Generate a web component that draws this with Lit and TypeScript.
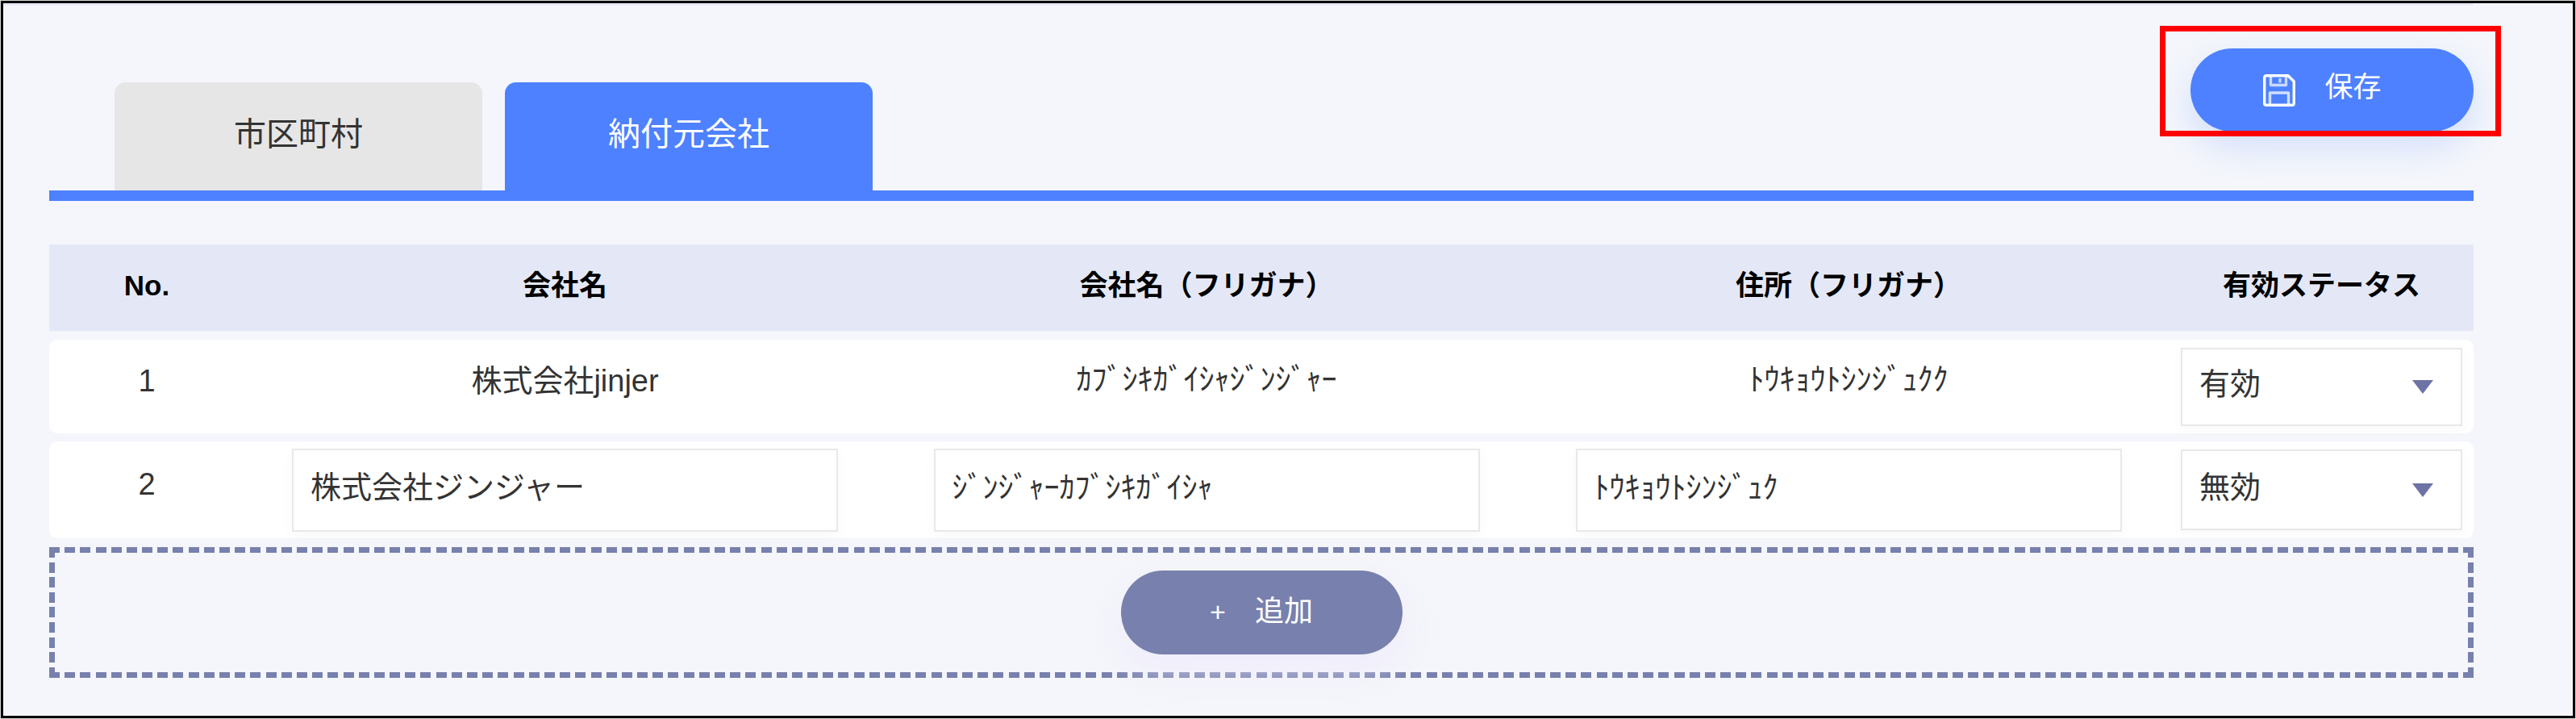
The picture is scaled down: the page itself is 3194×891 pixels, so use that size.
import { LitElement, html, css } from "lit";
import { customElement } from "lit/decorators.js";

const floppy = html`<svg class="floppy" viewBox="0 0 40 40" fill="none" stroke="#fff" stroke-width="3.4" stroke-linejoin="round">
  <path d="M4 1.700H31L38.300 9V36a2.300 2.300 0 0 1-2.300 2.300H4A2.300 2.300 0 0 1 1.700 36V4A2.300 2.300 0 0 1 4 1.700Z" />
  <path d="M9.500 2V13.500H28.500V2" stroke-opacity=".7" />
  <path d="M21 5V10.500" stroke-opacity=".65" />
  <path d="M8.500 38V23H31.500V38" stroke-opacity=".75" />
</svg>`;

@customElement("app-root")
export class AppRoot extends LitElement {
  static styles = css`
    :host {
      display: block;
      width: 3194px;
      height: 891px;
      box-sizing: border-box;
      padding: 1px;
      background: #d8d8d8;
      font-family: "Liberation Sans", "Noto Sans CJK JP", sans-serif;
      color: #333;
    }
    .frame {
      position: relative;
      box-sizing: border-box;
      height: 889px;
      border: 3px solid #000;
      background: #f4f6fb;
    }
    .page {
      box-sizing: border-box;
      width: 3063px;
      padding-left: 57px;
      border-top: 3px solid #e8eaf6;
    }
    .top {
      display: flex;
      justify-content: space-between;
      height: 229px;
      box-sizing: border-box;
      padding-top: 53px;
    }
    .tabs {
      display: flex;
      align-self: flex-end;
      gap: 28px;
      margin-left: 81px;
    }
    .tab {
      display: flex;
      align-items: center;
      justify-content: center;
      box-sizing: border-box;
      width: 456px;
      height: 134px;
      padding-bottom: 6px;
      border-radius: 14px 14px 0 0;
      background: #e6e6e6;
      font-size: 40px;
      line-height: 1;
      color: #333;
    }
    .tab.active {
      background: #4d81ff;
      color: #fff;
    }
    .pill {
      display: flex;
      align-items: center;
      justify-content: center;
      box-sizing: border-box;
      border-radius: 52px;
      color: #fff;
      line-height: 1;
    }
    .save {
      width: 351px;
      height: 103px;
      gap: 36px;
      padding-right: 24px;
      font-size: 35px;
      background: #4d81ff;
      box-shadow: 0 18px 44px rgba(77, 129, 255, 0.2);
    }
    .save span {
      position: relative;
      top: -4px;
    }
    .floppy {
      display: block;
      width: 40px;
      height: 40px;
    }
    .bar {
      height: 13px;
      background: #4d81ff;
      margin-bottom: 54px;
    }
    .row {
      display: grid;
      grid-template-columns: 242px 795px 796px 796px 377px;
      align-items: center;
      justify-items: center;
    }
    .head {
      height: 107px;
      background: #e4e8f6;
      font-size: 35px;
      font-weight: 700;
      line-height: 1;
      color: #000;
      padding-bottom: 7px;
      box-sizing: border-box;
      margin-bottom: 11px;
    }
    .data {
      background: #fff;
      border-radius: 10px;
      font-size: 38px;
      line-height: 1;
    }
    .r1 {
      height: 116px;
      margin-bottom: 10px;
    }
    .r2 {
      height: 120px;
      margin-bottom: 11px;
    }
    .cell {
      padding-bottom: 18px;
    }
    .cell.low {
      padding-bottom: 15px;
    }
    .field {
      display: flex;
      align-items: center;
      box-sizing: border-box;
      width: 677px;
      height: 103px;
      padding: 0 0 6px 21px;
      background: #fff;
      border: 2px solid #e8e8e8;
      box-shadow: 0 4px 16px rgba(0, 0, 0, 0.03);
    }
    .select {
      display: flex;
      align-items: center;
      justify-content: space-between;
      box-sizing: border-box;
      width: 349px;
      padding: 0 34px 0 21px;
      background: #fff;
      border: 2px solid #e8e8e8;
      box-shadow: 0 4px 16px rgba(0, 0, 0, 0.03);
    }
    .r1 .select {
      height: 97px;
    }
    .r2 .select {
      height: 100px;
    }
    .select span {
      position: relative;
      top: -3px;
    }
    .arrow {
      width: 0;
      height: 0;
      border-left: 13px solid transparent;
      border-right: 13px solid transparent;
      border-top: 17px solid #6d73a5;
    }
    .adder {
      display: flex;
      align-items: center;
      justify-content: center;
      box-sizing: border-box;
      height: 162px;
      --dash: #7880ad;
      background:
        repeating-linear-gradient(90deg, var(--dash) 0 13px, transparent 13px 19.186px) left top / 100% 7px no-repeat,
        repeating-linear-gradient(90deg, var(--dash) 0 13px, transparent 13px 19.186px) left bottom / 100% 7px no-repeat,
        repeating-linear-gradient(180deg, var(--dash) 0 13px, transparent 13px 18.625px) left top / 7px 100% no-repeat,
        repeating-linear-gradient(180deg, var(--dash) 0 13px, transparent 13px 18.625px) right top / 7px 100% no-repeat;
    }
    .add {
      width: 349px;
      height: 104px;
      gap: 36px;
      font-size: 36px;
      background: #7880ad;
      box-shadow: 0 20px 44px rgba(238, 232, 252, 0.7);
    }
    .add span {
      position: relative;
      top: -1px;
    }
    .add .plus {
      font-size: 34px;
    }
    .mark {
      position: absolute;
      left: 2674px;
      top: 28px;
      box-sizing: border-box;
      width: 423px;
      height: 137px;
      border: 7px solid #f00;
    }
  `;

  render() {
    return html`
      <div class="frame">
        <div class="page">
          <div class="top">
            <div class="tabs">
              <div class="tab">市区町村</div>
              <div class="tab active">納付元会社</div>
            </div>
            <div class="pill save">${floppy}<span>保存</span></div>
          </div>
          <div class="bar"></div>
          <div class="row head">
            <div>No.</div>
            <div>会社名</div>
            <div>会社名（フリガナ）</div>
            <div>住所（フリガナ）</div>
            <div>有効ステータス</div>
          </div>
          <div class="row data r1">
            <div class="cell low">1</div>
            <div class="cell low">株式会社jinjer</div>
            <div class="cell">ｶﾌﾞｼｷｶﾞｲｼｬｼﾞﾝｼﾞｬｰ</div>
            <div class="cell">ﾄｳｷｮｳﾄｼﾝｼﾞｭｸｸ</div>
            <div class="select"><span>有効</span><i class="arrow"></i></div>
          </div>
          <div class="row data r2">
            <div class="cell low">2</div>
            <div class="field">株式会社ジンジャー</div>
            <div class="field">ｼﾞﾝｼﾞｬｰｶﾌﾞｼｷｶﾞｲｼｬ</div>
            <div class="field">ﾄｳｷｮｳﾄｼﾝｼﾞｭｸ</div>
            <div class="select"><span>無効</span><i class="arrow"></i></div>
          </div>
          <div class="adder">
            <div class="pill add"><span class="plus">+</span><span>追加</span></div>
          </div>
        </div>
        <div class="mark"></div>
      </div>
    `;
  }
}
